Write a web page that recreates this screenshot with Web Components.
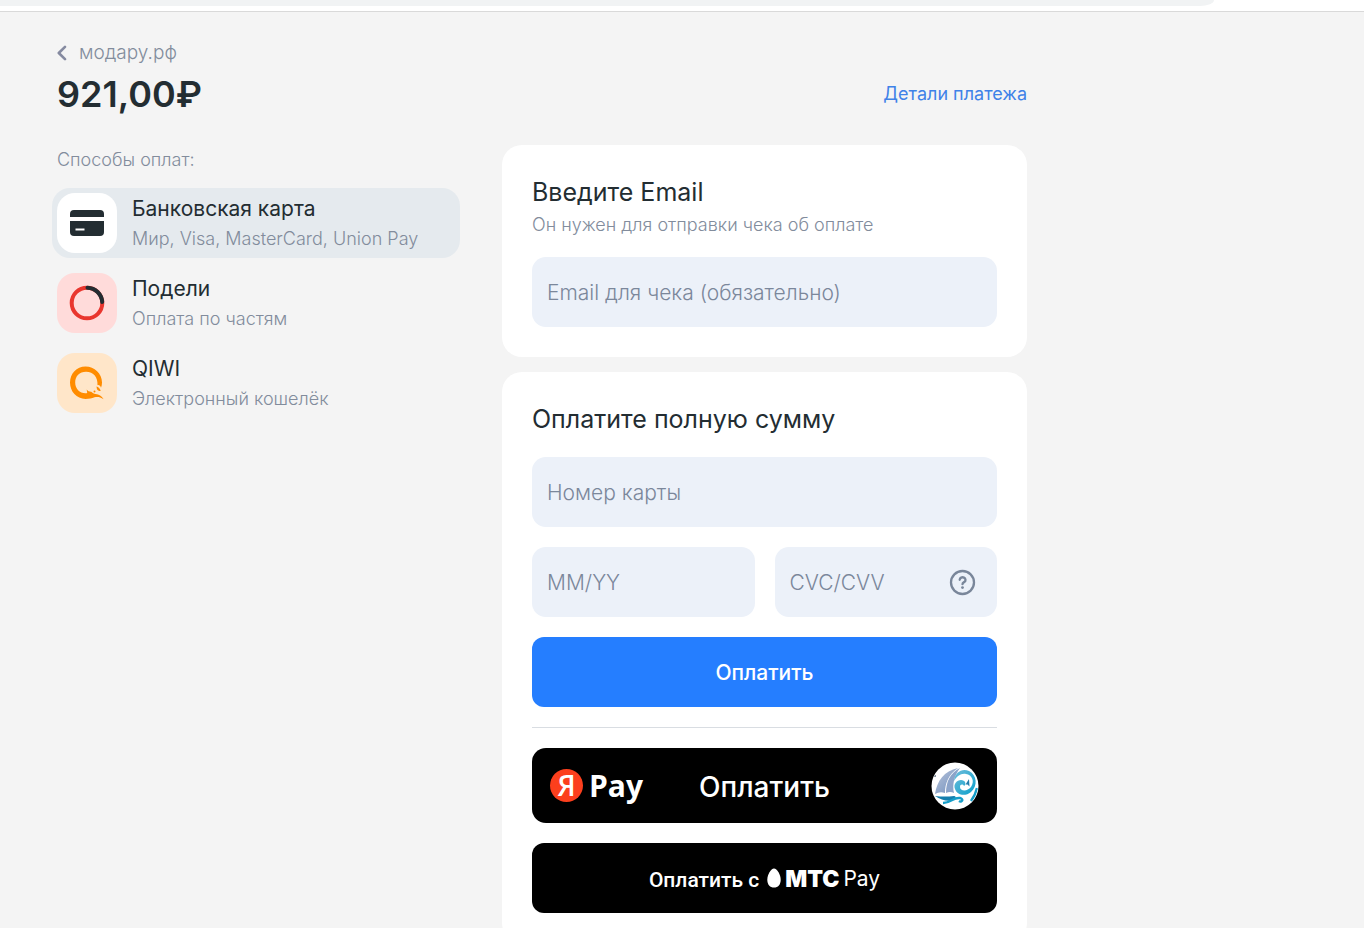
<!DOCTYPE html>
<html lang="ru">
<head>
<meta charset="utf-8">
<meta name="viewport" content="width=device-width, initial-scale=1">
<title>Оплата заказа</title>
<style>
  html { background: #f4f4f4; }
  body {
    margin: 0;
    --ink: #232d32;
    --muted: #828c9c;
    --field: #ecf1f9;
    --blue: #257eff;
    font-family: Inter, "Liberation Sans", sans-serif;
    font-size: 18px;
    line-height: 24px;
    color: var(--ink);
  }
</style>
</head>
<body>
<pay-page></pay-page>

<script>
const define = (name, html, setup) => {
  const template = document.createElement('template');
  template.innerHTML = html;
  customElements.define(name, class extends HTMLElement {
    constructor() {
      super();
      this.attachShadow({ mode: 'open' }).append(template.content.cloneNode(true));
    }
    connectedCallback() {
      if (setup) setup(this, this.shadowRoot);
    }
  });
};

define('browser-edge', `
  <style>
    :host { display: block; height: 11px; background: #fff; border-bottom: 1px solid #d9d9d9; }
    div { width: 89%; height: 6px; background: #f1f3f4; border-bottom-right-radius: 14px 6px; }
  </style>
  <div></div>`);

define('pay-header', `
  <style>
    :host { display: block; }
    .shop { display: inline-flex; align-items: center; gap: 11px; color: var(--muted); text-decoration: none; font-size: 19px; font-weight: 300; line-height: 28px; }
    .shop svg { display: block; }
    .row { display: flex; align-items: center; justify-content: space-between; padding-bottom: 2px; line-height: 54px; }
    h1 { margin: 0; font-size: 36px; font-weight: 600; }
    .details { color: #3f82e8; text-decoration: none; }
  </style>
  <a class="shop" href="#shop">
    <svg width="11" height="16" viewBox="0 0 11 16" fill="none" stroke="#858aa0" stroke-width="2.6" stroke-linecap="round" stroke-linejoin="round"><path d="M8 1.800 1.800 8l6.200 6.200"/></svg>
    <slot name="shop"></slot>
  </a>
  <div class="row">
    <h1><slot name="sum"></slot></h1>
    <a class="details" href="#details"><slot name="details"></slot></a>
  </div>`);

define('pay-method', `
  <style>
    :host { display: block; }
    button { display: flex; align-items: center; gap: 15px; width: 100%; box-sizing: border-box; padding: 5px; border: 0; border-radius: 18px; background: none; font: inherit; color: inherit; text-align: left; cursor: pointer; }
    :host([selected]) button { background: #e5eaee; }
    .icon { display: grid; place-items: center; width: 60px; height: 60px; border-radius: 18px; background: var(--tile, #fff); }
    .text { height: 58px; }
    .title, .note { display: block; line-height: 30px; }
    .title { font-size: 21px; }
    .note { font-size: 18px; font-weight: 300; color: var(--muted); }
  </style>
  <button type="button">
    <span class="icon"><slot name="icon"></slot></span>
    <span class="text"><span class="title"><slot name="title"></slot></span><span class="note"><slot></slot></span></span>
  </button>`,
  (host, root) => root.querySelector('button').setAttribute('aria-pressed', host.hasAttribute('selected')));

define('pay-card', `
  <style>
    :host { display: flex; flex-direction: column; gap: 20px; padding: 30px; border-radius: 20px; background: #fff; }
    h2 { margin: 0; font-size: 25px; font-weight: 400; line-height: 35px; }
    p { margin: 0; padding-top: 2px; font-size: 18px; font-weight: 300; line-height: 25px; color: var(--muted); }
    :host(:not([note])) p { display: none; }
  </style>
  <header><h2><slot name="title"></slot></h2><p><slot name="note"></slot></p></header>
  <slot></slot>`);

define('pay-field', `
  <style>
    :host { display: flex; align-items: center; height: 70px; border-radius: 14px; background: var(--field); min-width: 0; }
    input { flex: 1; min-width: 0; height: 100%; box-sizing: border-box; padding: 0 15px; border: 0; outline: 0; background: none; font: 300 21px/30px Inter, "Liberation Sans", sans-serif; color: var(--ink); }
    input::placeholder { color: #7b879b; opacity: 1; }
  </style>
  <input>
  <slot></slot>`,
  (host, root) => {
    const input = root.querySelector('input');
    input.type = host.getAttribute('type') || 'text';
    input.placeholder = host.getAttribute('label');
    input.setAttribute('aria-label', host.getAttribute('label'));
  });

define('cvc-help', `
  <style>
    :host { display: block; margin-right: 21px; }
    button { display: block; padding: 0; border: 0; background: none; cursor: pointer; }
    svg { display: block; }
  </style>
  <button type="button" aria-label="Где найти код">
    <svg width="27" height="27" viewBox="0 0 27 27" fill="none" stroke="#79869a" stroke-width="2.300" stroke-linecap="round">
      <circle cx="13.500" cy="13.500" r="11.500"/>
      <path d="M10.700 10.800a2.900 2.600 0 1 1 4.600 2.200c-1 .7-1.800 1-1.800 2.200"/>
      <circle cx="13.500" cy="18.600" r="1.400" fill="#79869a" stroke="none"/>
    </svg>
  </button>`);

define('pay-submit', `
  <style>
    :host { display: block; }
    button { display: block; width: 100%; height: 70px; padding: 2px 0 0; border: 0; border-radius: 12px; background: var(--blue); color: #fff; font: 500 21px/30px Inter, "Liberation Sans", sans-serif; cursor: pointer; }
  </style>
  <button type="submit"><slot></slot></button>`);

define('yandex-pay', `
  <style>
    :host { display: block; }
    button { display: grid; grid-template-columns: 1fr auto 1fr; align-items: center; width: 100%; height: 75px; box-sizing: border-box; padding: 0 18px; border: 0; border-radius: 14px; background: #000; color: #fff; cursor: pointer; }
    .brand { display: flex; align-items: center; gap: 6px; font: 700 30px/33px "Open Sans", sans-serif; }
    .ya { display: grid; place-items: center; width: 33px; height: 33px; border-radius: 50%; background: #fc3f1d; font-weight: 600; font-size: 28px; }
    .label { padding-top: 2px; font: 500 28px/34px Inter, "Liberation Sans", sans-serif; }
    svg { display: block; justify-self: end; }
  </style>
  <button type="button">
    <span class="brand"><span class="ya">Я</span><span>Pay</span></span>
    <span class="label"><slot></slot></span>
    <svg width="48" height="48" viewBox="0 0 48 48">
      <defs>
        <clipPath id="disc"><circle cx="24" cy="24" r="23"/></clipPath>
        <linearGradient id="sail" x1="0" y1="0" x2="1" y2="1"><stop offset="0" stop-color="#b9c4da"/><stop offset="1" stop-color="#6f8fbd"/></linearGradient>
        <linearGradient id="wave" x1="0" y1="0" x2="1" y2="1"><stop offset="0" stop-color="#70bddb"/><stop offset="1" stop-color="#0aa0cb"/></linearGradient>
      </defs>
      <circle cx="24" cy="24" r="23.500" fill="#fff"/>
      <g clip-path="url(#disc)">
        <path d="M4 32C6 19 13 9 27 6 17 13 14 22 14 31Q9 29 4 32Z" fill="url(#sail)"/>
        <path d="M15 31C15 20 19 11 29 6 23 14 21 23 23 31Q19 29 15 31Z" fill="#8ca4ca"/>
        <path d="M23 19C24 10 31 6 38 9c8 4 9 15 2 21-6 5-14 3-16-3-2-5 2-9 6-9 4 0 6 4 3 6-1-2-4-2-4 1 0 4 7 5 11 0 4-6 1-12-5-13-5-1-9 2-12 7Z" fill="url(#wave)"/>
        <path d="M34.500 22.500 38 17l.5 7.500-2-2Z" fill="#277dac"/>
        <path d="M4 34q10 1 19 0c2 0 2 2 1 3-4 3-13 2-20-3Z" fill="#147fae"/>
        <path d="M12 41c8 0 10-6 17-5 4 1 2 5-1 3M46 26c-1 5-3 9-6 13" fill="none" stroke="#159dc8" stroke-width="2.500"/>
        <circle cx="4" cy="14" r="1" fill="#5b6d7c"/>
      </g>
    </svg>
  </button>`);

define('mts-pay', `
  <style>
    :host { display: block; }
    button { display: flex; align-items: center; justify-content: center; width: 100%; height: 70px; padding: 0; border: 0; border-radius: 12px; background: #000; color: #fff; font: 500 21px/26px Roboto, sans-serif; cursor: pointer; }
    .call { padding-top: 4px; }
    svg { display: block; margin: 0 4px 0 8px; }
    .mts, .pay { padding-top: 1px; font-family: Inter, sans-serif; }
    .mts { font-size: 23px; font-weight: 900; }
    .pay { margin-left: 4px; font-size: 21px; font-weight: 400; }
  </style>
  <button type="button">
    <span class="call"><slot></slot></span>
    <svg width="14" height="20" viewBox="0 0 14 20"><path d="M7 .5c3 0 6.700 6.200 6.700 11.200S11 19.500 7 19.500.3 16.700.3 11.700 4 .5 7 .5Z" fill="#fff"/></svg>
    <span class="mts">МТС</span><span class="pay">Pay</span>
  </button>`);

define('pay-page', `
  <style>
    :host { display: block; }
    main { max-width: 970px; padding: 27px 57px 30px; }
    .columns { display: grid; grid-template-columns: minmax(0, 403fr) minmax(0, 525fr); column-gap: 42px; margin-top: 22px; }
    .caption { margin: 0 0 13px; font-size: 18px; font-weight: 300; line-height: 30px; color: var(--muted); }
    .methods { display: grid; gap: 10px; margin-left: -5px; }
    form { display: grid; gap: 15px; }
    .pair { display: grid; grid-template-columns: 1fr 1fr; gap: 20px; }
    hr { width: 100%; margin: 0; border: 0; border-top: 1px solid #d9dde2; }
    svg { display: block; }
  </style>
  <browser-edge></browser-edge>
  <main>
    <pay-header><span slot="shop">модару.рф</span><span slot="sum">921,00₽</span><span slot="details">Детали платежа</span></pay-header>
    <div class="columns">
      <section>
        <p class="caption">Способы оплат:</p>
        <div class="methods">
          <pay-method selected>
            <svg slot="icon" width="36" height="28" viewBox="0 0 36 28" fill="#232d32"><path d="M5 1h26a4 4 0 0 1 4 4v3H1V5a4 4 0 0 1 4-4Z"/><path d="M1 12h34v11a4 4 0 0 1-4 4H5a4 4 0 0 1-4-4Z"/><path d="M6.500 20.500h9" stroke="#fff" stroke-width="2"/></svg>
            <span slot="title">Банковская карта</span>Мир, Visa, MasterCard, Union Pay
          </pay-method>
          <pay-method style="--tile:#ffdbda">
            <svg slot="icon" width="36" height="36" viewBox="0 0 36 36" fill="none" stroke-width="4" stroke-linecap="round"><circle cx="18" cy="18" r="15.300" stroke="#e9362e"/><path d="M18.500 2.700A15.300 15.300 0 0 1 33.200 17" stroke="#232d32"/></svg>
            <span slot="title">Подели</span>Оплата по частям
          </pay-method>
          <pay-method style="--tile:#ffe6c9">
            <svg slot="icon" width="36" height="36" viewBox="0 0 36 36"><path fill="#ff8c00" d="M16.500 1.500C25.500 1.500 33 8.500 33 17.500c0 2-.3 3.700-1 5.200-.6-2-2-3-3.500-2.500.4-8-3.800-13.400-11.500-13.400C10.500 6.800 6.200 11.300 6.200 17.500s4.300 10.700 10.300 10.700c.7 0 1.200 0 1.700-.2l-.5-3.500c1.300 1.500 2.700 2.300 4.500 2.200 1.200 1.200 2.700 2 4.400 2.200 3.400.5 6 1.800 8 5.300-3.400-2.300-6-2.600-9.100-2-2.500 1.200-5.500 1.700-9 1.700C7.500 33.900 1 26.500 1 17.500S7.500 1.500 16.500 1.500Z"/><path fill="#ff8c00" d="M27.500 21.500c2 .5 3.500 2 4.200 4.500-1.600.2-3-.7-3.700-1.800Z"/><circle cx="25.500" cy="26.500" r="1" fill="#ff8c00"/></svg>
            <span slot="title">QIWI</span>Электронный кошелёк
          </pay-method>
        </div>
      </section>
      <form>
        <pay-card note>
          <span slot="title">Введите Email</span>
          <span slot="note">Он нужен для отправки чека об оплате</span>
          <pay-field type="email" label="Email для чека (обязательно)"></pay-field>
        </pay-card>
        <pay-card>
          <span slot="title">Оплатите полную сумму</span>
          <pay-field label="Номер карты"></pay-field>
          <div class="pair">
            <pay-field label="MM/YY"></pay-field>
            <pay-field label="CVC/CVV"><cvc-help></cvc-help></pay-field>
          </div>
          <pay-submit>Оплатить</pay-submit>
          <hr>
          <yandex-pay>Оплатить</yandex-pay>
          <mts-pay>Оплатить с</mts-pay>
        </pay-card>
      </form>
    </div>
  </main>`);
</script>
</body>
</html>
